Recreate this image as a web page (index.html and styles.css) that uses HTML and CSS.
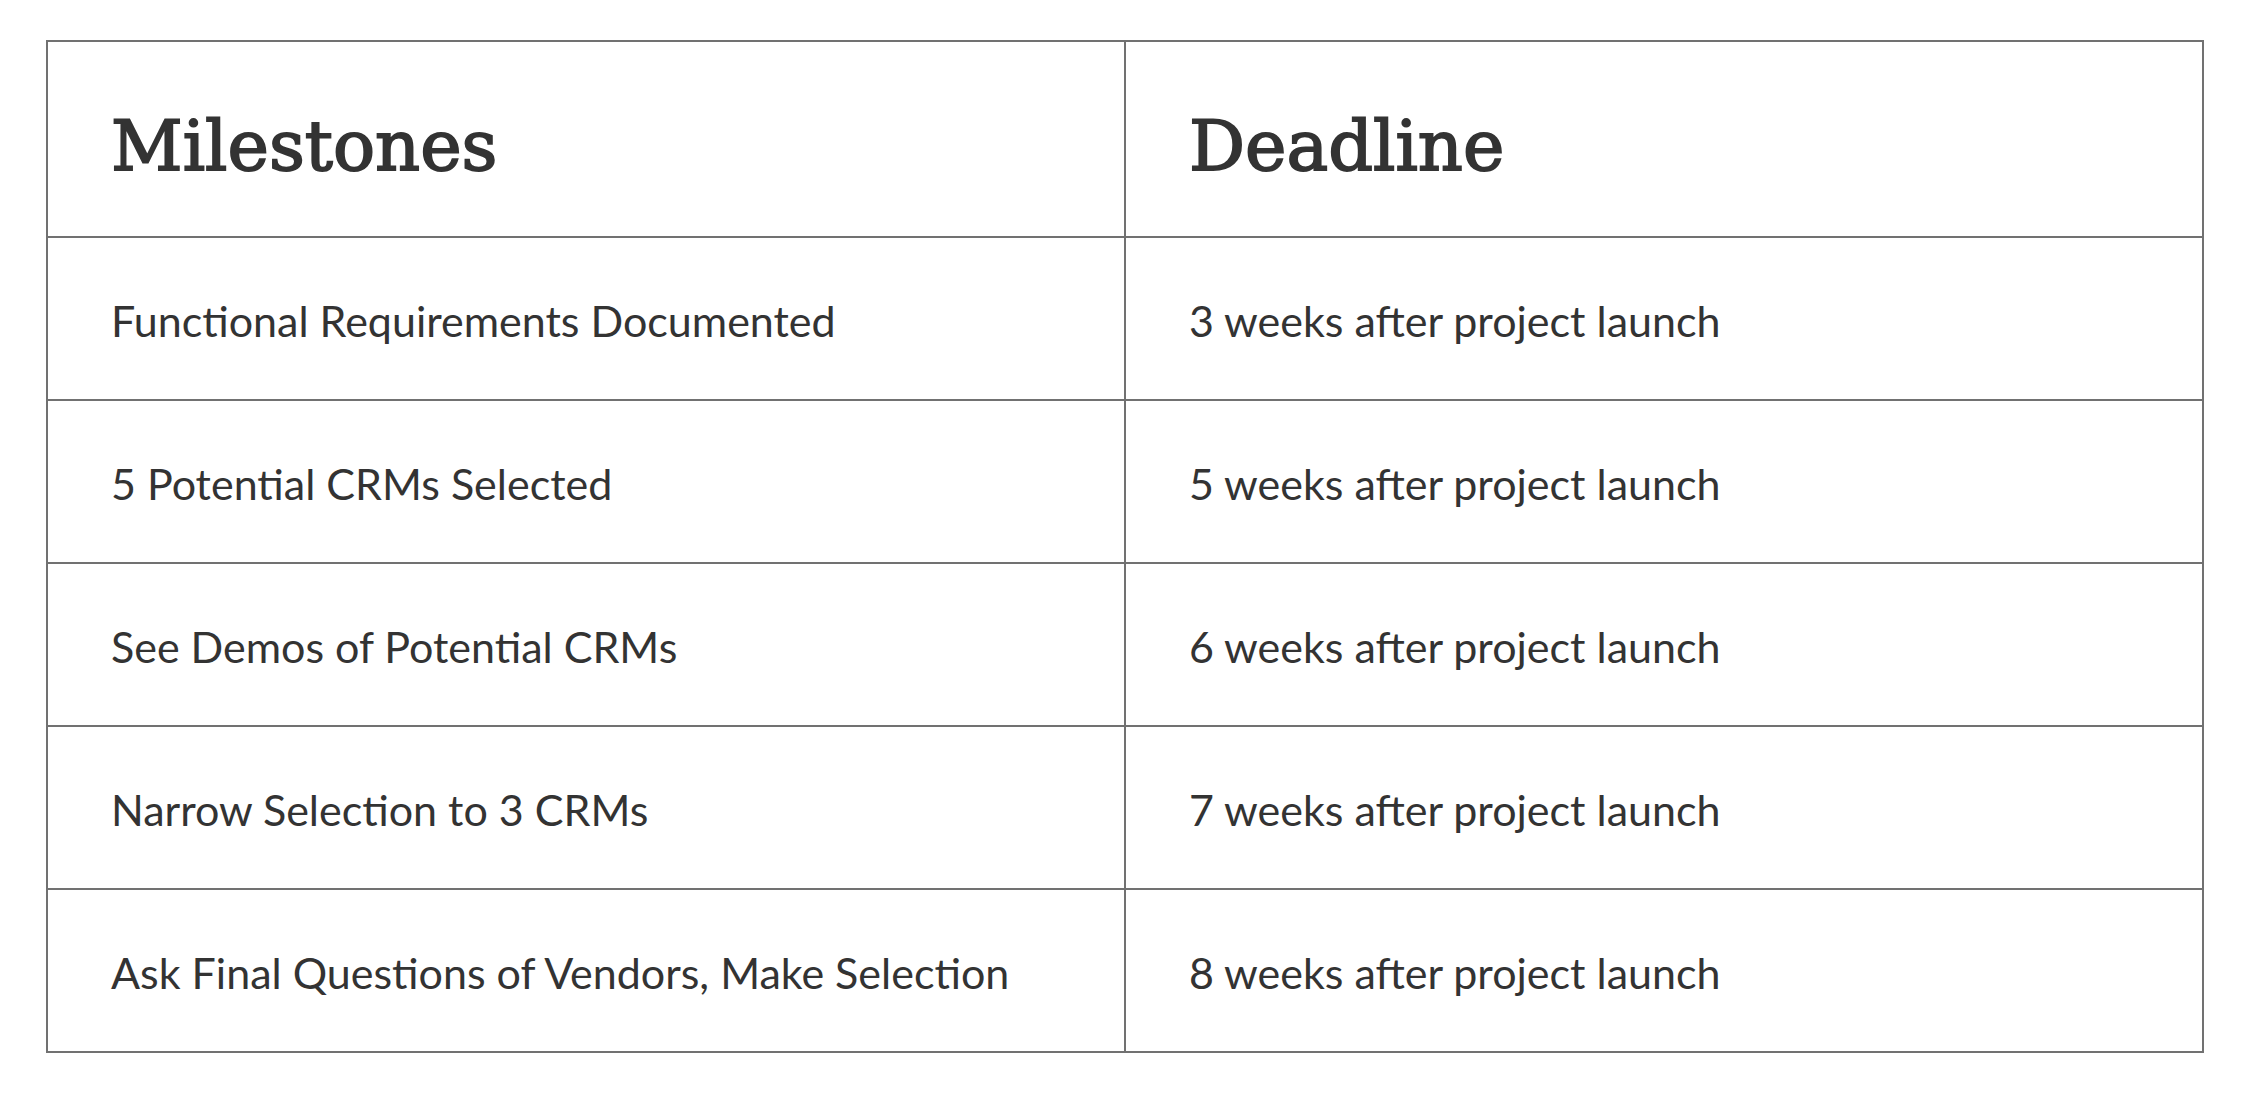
FILE: index.html
```html
<!DOCTYPE html>
<html lang="en">
<head>
<meta charset="utf-8">
<title>Milestones</title>
<link rel="stylesheet" href="styles.css">
</head>
<body>
<div class="page">
  <table class="milestones">
    <thead>
      <tr class="head-row">
        <th>Milestones</th>
        <th>Deadline</th>
      </tr>
    </thead>
    <tbody>
      <tr><td>Functional Requirements Documented</td><td>3 weeks after project launch</td></tr>
      <tr><td>5 Potential CRMs Selected</td><td>5 weeks after project launch</td></tr>
      <tr><td>See Demos of Potential CRMs</td><td>6 weeks after project launch</td></tr>
      <tr><td>Narrow Selection to 3 CRMs</td><td>7 weeks after project launch</td></tr>
      <tr><td>Ask Final Questions of Vendors, Make Selection</td><td>8 weeks after project launch</td></tr>
    </tbody>
  </table>
</div>
</body>
</html>
```

FILE: styles.css
```css
html, body {
  margin: 0;
  padding: 0;
  background: #ffffff;
}

.page {
  padding: 40px 46px 0 46px;
}

.milestones {
  width: 100%;
  border-collapse: collapse;
  table-layout: fixed;
  color: #333333;
}

.milestones th,
.milestones td {
  width: 50%;
  border: 2px solid #717171;
  text-align: left;
  padding: 0 0 0 63px;
}

.milestones th {
  height: 180px;
  font-family: "DejaVu Serif", "Liberation Serif", serif;
  font-weight: normal;
  font-size: 70px;
  padding-top: 14px;
  -webkit-text-stroke: 1.8px #333333;
}

.milestones td {
  height: 157px;
  font-family: Lato, "Noto Sans", sans-serif;
  font-size: 43px;
  padding-top: 4px;
}
```
